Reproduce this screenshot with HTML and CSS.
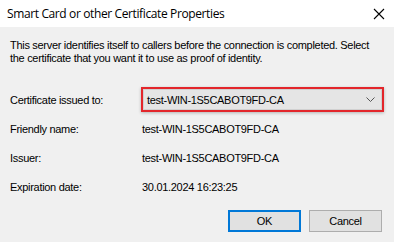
FILE: index.html
```html
<!DOCTYPE html>
<html>
<head>
<meta charset="utf-8">
<link rel="stylesheet" href="styles.css">
</head>
<body>
<div class="dialog">
  <div class="titlebar">
    <span class="title">Smart Card or other Certificate Properties</span>
    <svg class="close" width="12" height="12" viewBox="0 0 12 12"><path d="M1 1L11 11M11 1L1 11" stroke="#000" stroke-width="1.1" fill="none"/></svg>
  </div>
  <div class="content">
    <p class="desc">This server identifies itself to callers before the connection is completed. Select the certificate that you want it to use as proof of identity.</p>
    <div class="fields">
      <div class="label">Certificate issued to:</div>
      <div class="value">
        <div class="highlight">
          <div class="combo">
            <span>test-WIN-1S5CABOT9FD-CA</span>
            <svg class="chev" width="9" height="5" viewBox="0 0 9 5"><path d="M0.5 0.5L4.5 4.5L8.5 0.5" stroke="#555" stroke-width="1" fill="none"/></svg>
          </div>
        </div>
      </div>
      <div class="label">Friendly name:</div>
      <div class="value">test-WIN-1S5CABOT9FD-CA</div>
      <div class="label">Issuer:</div>
      <div class="value">test-WIN-1S5CABOT9FD-CA</div>
      <div class="label">Expiration date:</div>
      <div class="value">30.01.2024 16:23:25</div>
    </div>
    <div class="buttons">
      <button class="btn default">OK</button>
      <button class="btn">Cancel</button>
    </div>
  </div>
</div>
</body>
</html>
```
FILE: styles.css
```css
html, body {
  margin: 0;
  padding: 0;
  background: #f0f0f0;
}
.dialog {
  width: 394px;
  height: 242px;
  background: #f0f0f0;
  font-family: "Liberation Sans", Arial, sans-serif;
  font-size: 11px;
  letter-spacing: -0.3px;
  color: #000;
}
.titlebar {
  height: 27px;
  background: #fff;
  display: flex;
  align-items: center;
  justify-content: space-between;
  padding: 0 9px 0 7px;
}
.title {
  font-family: "Open Sans", "Noto Sans", sans-serif;
  font-size: 12px;
  letter-spacing: -0.38px;
  padding-bottom: 1px;
}
.close {
  display: block;
  margin-right: 0;
}
.content {
  padding: 12px 8px 0 10px;
}
.desc {
  margin: 0;
  line-height: 13px;
}
.fields {
  display: grid;
  grid-template-columns: 131px 243px;
  grid-auto-rows: 29px;
  align-items: center;
  margin-top: 20px;
}
.value {
  padding-left: 1px;
}
.highlight {
  border: 2px solid #e3262b;
  box-shadow: 0 1px 3px rgba(0,0,0,0.25);
  margin-left: -1px;
}
.combo {
  height: 19px;
  background: #e5e5e5;
  border: 1px solid #d0d0d0;
  display: flex;
  align-items: center;
  justify-content: space-between;
  padding: 0 6px 0 3px;
}
.chev {
  display: block;
}
.buttons {
  display: flex;
  justify-content: flex-end;
  gap: 8px;
  margin-top: 9px;
  padding-right: 4px;
}
.btn {
  width: 73px;
  height: 22px;
  background: #e1e1e1;
  border: 1px solid #adadad;
  font-family: "Liberation Sans", Arial, sans-serif;
  font-size: 11px;
  letter-spacing: -0.3px;
  color: #000;
  padding: 0;
  margin: 0;
}
.btn.default {
  border: 2px solid #0078d7;
}
```
